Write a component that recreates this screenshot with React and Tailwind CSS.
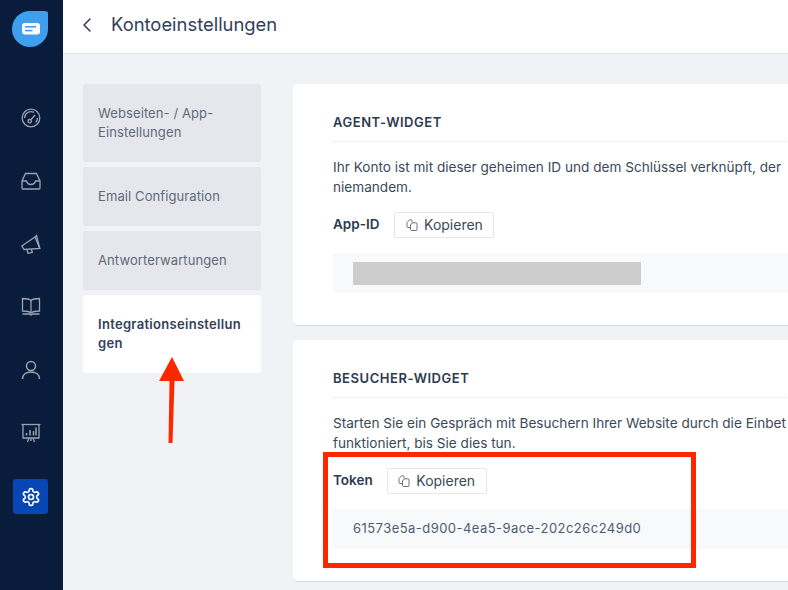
import React from 'react';
import { ChevronLeft } from 'lucide-react';

const font = { fontFamily: 'Inter, sans-serif' };

const tabs = [
  { label: 'Webseiten- / App-Einstellungen', h: 'h-[78px]' },
  { label: 'Email Configuration', h: 'h-[59px]' },
  { label: 'Antworterwartungen', h: 'h-[59px]' },
  { label: 'Integrationseinstellungen', h: 'h-[78px]', active: true },
];

const Logo = () => (
  <svg width="36" height="36" viewBox="0 0 36 36">
    <path d="M18 0H33a3 3 0 0 1 3 3V18A18 18 0 1 1 18 0Z" fill="#3f9fee" />
    <rect x="10" y="12" width="18" height="11.5" rx="3" fill="#fff" />
    <rect x="13" y="15" width="11" height="1.6" fill="#3f9fee" />
    <rect x="13" y="18.8" width="7.5" height="1.6" fill="#3f9fee" />
  </svg>
);

const iconProps = { width: 20, height: 20, viewBox: '0 0 20 20', fill: 'none', stroke: '#9aa2b1', strokeWidth: 1.3 };

const Gauge = () => (
  <svg {...iconProps}>
    <circle cx="10" cy="10" r="8.8" />
    <path d="M3.600 10a6.400 6.400 0 0 1 9.500-5.600" />
    <path d="M16.400 10a6.400 6.400 0 0 1-1.700 4.400" />
    <circle cx="8.700" cy="13.200" r="1.700" />
    <path d="M9.800 12 14 7" />
  </svg>
);

const Inbox = () => (
  <svg {...iconProps}>
    <path d="M4.500 2.500h11l3.500 7.500V17a1 1 0 0 1-1 1H2a1 1 0 0 1-1-1V10Z" />
    <path d="M1 10h4.500c.5 2 2.200 3.500 4.500 3.500s4-1.500 4.500-3.500H19" />
  </svg>
);

const Megaphone = () => (
  <svg {...iconProps}>
    <path d="M.8 12 14 3l4.800 11.500L3 15.500Z" />
    <path d="m14 3 1.500-1.500 3.300 13" />
    <path d="m6 15.500 1 3.800 4.300-1-1-3" />
  </svg>
);

const Book = () => (
  <svg {...iconProps}>
    <path d="M10 3.500C8.500 2 5 1.500 1.500 1.500v12.500c3.500 0 7 .5 8.500 2 1.500-1.500 5-2 8.500-2V1.500C15 1.500 11.500 2 10 3.500Z" />
    <path d="M10 3.500V16" />
    <path d="M1.500 17h7l1.500 1 1.500-1h7" />
  </svg>
);

const Person = () => (
  <svg {...iconProps} strokeWidth="1.5">
    <circle cx="10" cy="6" r="4.500" />
    <path d="M1.500 19c0-4.500 3.500-7 8.500-7s8.500 2.500 8.500 7" />
  </svg>
);

const Board = () => (
  <svg {...iconProps}>
    <path d="M.5 1.500h19" />
    <path d="M2 1.500v13.500h16V1.500" />
    <path d="M5.500 12.500V10M9 12.500V7M12.500 12.500V8M15 12.500V4.500" strokeWidth="1.500" />
    <path d="M8 15 6.500 19M12 15l1.500 4M10 15v3" />
  </svg>
);

const Gear = () => (
  <svg width="20" height="20" viewBox="0 0 24 24" fill="none" stroke="#fff" strokeWidth="2">
    <circle cx="12" cy="12" r="3" />
    <path d="M12.220 2h-.440a2 2 0 0 0-2 2v.180a2 2 0 0 1-1 1.730l-.430.250a2 2 0 0 1-2 0l-.150-.080a2 2 0 0 0-2.730.730l-.220.380a2 2 0 0 0 .730 2.730l.150.100a2 2 0 0 1 1 1.720v.510a2 2 0 0 1-1 1.740l-.150.090a2 2 0 0 0-.730 2.730l.220.380a2 2 0 0 0 2.730.730l.150-.080a2 2 0 0 1 2 0l.430.250a2 2 0 0 1 1 1.730V20a2 2 0 0 0 2 2h.440a2 2 0 0 0 2-2v-.180a2 2 0 0 1 1-1.730l.430-.250a2 2 0 0 1 2 0l.150.080a2 2 0 0 0 2.730-.730l.220-.390a2 2 0 0 0-.730-2.730l-.150-.080a2 2 0 0 1-1-1.740v-.500a2 2 0 0 1 1-1.740l.150-.090a2 2 0 0 0 .730-2.730l-.220-.380a2 2 0 0 0-2.730-.730l-.150.080a2 2 0 0 1-2 0l-.430-.250a2 2 0 0 1-1-1.730V4a2 2 0 0 0-2-2z" />
  </svg>
);

const CopyIcon = () => (
  <svg width="12" height="12" viewBox="0 0 12 12" fill="none" stroke="#6b7280" strokeWidth="1">
    <path d="M4.500 8.500H2a1 1 0 0 1-1-1V3.500L3.500.8H5a1 1 0 0 1 1 1V3.500" />
    <path d="M6.500 3.800H10a1 1 0 0 1 1 1v5.700a1 1 0 0 1-1 1H5.500a1 1 0 0 1-1-1V6Z" />
  </svg>
);

const CopyButton = () => (
  <button className="flex items-center justify-center gap-[6px] w-[100px] h-[26px] bg-white border border-[#e5e7eb] rounded-[2px] text-sm text-[#3c4858]">
    <CopyIcon />
    Kopieren
  </button>
);

const Sidebar = () => (
  <aside className="w-[63px] h-full shrink-0 bg-[#0a1c3b] flex flex-col items-center pr-[2px]">
    <div className="mt-[11px] mr-[1px]"><Logo /></div>
    <div className="mt-[61px] flex flex-col items-center gap-[43px]">
      <Gauge />
      <Inbox />
      <Megaphone />
      <Book />
      <Person />
      <Board />
    </div>
    <div className="mt-[36px] w-[35px] h-[35px] rounded-[3px] bg-[#0746b5] flex items-center justify-center">
      <Gear />
    </div>
  </aside>
);

const Card = ({ title, children }) => (
  <section className="w-[700px] h-[242px] bg-white rounded-[5px] border-b border-[#d5d8df] pt-[28px] pl-[40px]">
    <h2 className="text-[13px] leading-5 font-semibold text-[#2e3a50] tracking-[0.55px] uppercase pb-[9px] border-b border-dotted border-[#e2e4e9]">{title}</h2>
    {children}
  </section>
);

export default function App() {
  return (
    <div style={font} className="relative flex w-[788px] h-[590px] overflow-hidden bg-[#f1f2f6]">
      <Sidebar />

      <main className="flex-1 min-w-0 flex flex-col">
        <header className="h-[54px] shrink-0 bg-white border-b border-[#e4e6eb] flex items-center pl-[12px] pb-[4px]">
          <ChevronLeft size={24} strokeWidth={1.5} color="#2e3a50" />
          <h1 className="ml-[12px] text-[18.4px] text-[#34415a]">Kontoeinstellungen</h1>
        </header>

        <div className="flex pt-[30px] pl-[20px]">
          <nav className="w-[178px] shrink-0 flex flex-col gap-[5px]">
            {tabs.map((tab) => (
              <div
                key={tab.label}
                className={`${tab.h} pl-[15px] rounded-[3px] flex items-center text-[13px] leading-[19px] break-words ${
                  tab.active
                    ? 'bg-white font-semibold text-[#34415a] tracking-[0.3px] pr-[19px]'
                    : 'bg-[#e6e7ec] text-[#5f6b7c] tracking-[0.1px] pr-[15px]'
                }`}
              >
                <span className="block w-full">{tab.label}</span>
              </div>
            ))}
          </nav>

          <div className="ml-[32px] flex flex-col gap-[14px] shrink-0">
            <Card title="Agent-Widget">
              <p className="mt-[15px] text-[13.6px] leading-5 text-[#3c4858] whitespace-nowrap">
                Ihr Konto ist mit dieser geheimen ID und dem Schlüssel verknüpft, der<br />niemandem.
              </p>
              <div className="mt-[15px] flex items-center">
                <span className="text-[13.5px] font-semibold text-[#2e3a50] -mt-[2px]">App-ID</span>
                <div className="ml-[15px]"><CopyButton /></div>
              </div>
              <div className="mt-[15px] h-[40px] bg-[#f8f9fb] rounded-[3px] flex items-center pl-[20px]">
                <div className="w-[288px] h-[23px] bg-[#cdcdcd]" />
              </div>
            </Card>

            <Card title="Besucher-Widget">
              <p className="mt-[15px] text-[13.6px] leading-5 text-[#3c4858] whitespace-nowrap">
                Starten Sie ein Gespräch mit Besuchern Ihrer Website durch die Einbet<br />funktioniert, bis Sie dies tun.
              </p>
              <div className="mt-[15px] flex items-center">
                <span className="text-[13.5px] font-semibold text-[#2e3a50] -mt-[2px]">Token</span>
                <div className="ml-[14px]"><CopyButton /></div>
              </div>
              <div className="mt-[15px] h-[40px] bg-[#f8f9fb] rounded-[3px] flex items-center pl-[20px] text-[13px] text-[#4f5b70] tracking-[0.45px]">
                61573e5a-d900-4ea5-9ace-202c26c249d0
              </div>
            </Card>
          </div>
        </div>
      </main>

      {/* rote Markierungen aus dem Screenshot */}
      <div className="absolute left-[323px] top-[452px] w-[373px] h-[116px] border-[5px] border-[#ff2600]" />
      <svg className="absolute left-[155px] top-[355px]" width="32" height="90" viewBox="0 0 32 90">
        <path d="M17 2 29 26H19.500L17.500 88H13.500L14.500 26H4Z" fill="#ff2600" />
      </svg>
    </div>
  );
}
